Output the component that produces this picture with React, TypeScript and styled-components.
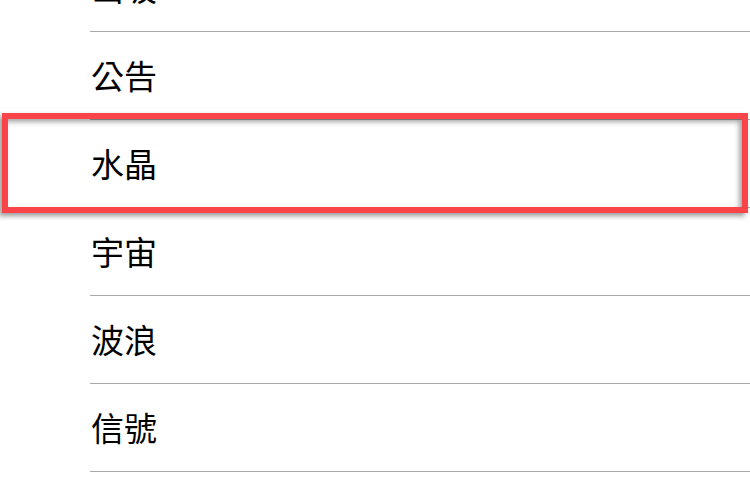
import React from "react";
import styled, { createGlobalStyle } from "styled-components";

const GlobalStyle = createGlobalStyle`
    html, body {
        margin: 0;
        padding: 0;
        background: #ffffff;
        overflow: hidden;
    }
`;

const Page = styled.div`
    width: 750px;
    height: 480px;
    overflow: hidden;
    background: #ffffff;
`;

const List = styled.ul`
    list-style: none;
    margin: -57px 0 0 0;
    padding: 0;
`;

const Row = styled.li<{ $selected?: boolean }>`
    position: relative;
    height: 88px;
    display: flex;
    align-items: center;
    padding-left: 91px;
    font-family: "Noto Sans CJK TC", "Noto Sans CJK SC", "Noto Sans", sans-serif;
    font-size: 33px;
    color: #000000;
    z-index: ${(p) => (p.$selected ? 1 : 0)};

    &::after {
        content: "";
        position: absolute;
        left: 90px;
        right: 0;
        bottom: -1px;
        height: 1px;
        background: #a9a9a9;
    }
`;

const Label = styled.span`
    line-height: 1;
    transform: translateY(0px);
`;

const Highlight = styled.div`
    position: absolute;
    top: -6px;
    bottom: -6px;
    left: 2px;
    right: 2px;
    box-sizing: border-box;
    border: 6px solid #f9454a;
    box-shadow:
        -3px 3px 5px rgba(0, 0, 0, 0.4),
        inset -3px 3px 5px rgba(0, 0, 0, 0.35);
    pointer-events: none;
    z-index: 2;
`;

const tones = ["山坡", "公告", "水晶", "宇宙", "波浪", "信號"];

export default function App() {
    const selected = "水晶";

    return (
        <Page>
            <GlobalStyle />
            <List>
                {tones.map((name) => (
                    <Row key={name} $selected={name === selected}>
                        <Label>{name}</Label>
                        {name === selected && <Highlight />}
                    </Row>
                ))}
            </List>
        </Page>
    );
}
